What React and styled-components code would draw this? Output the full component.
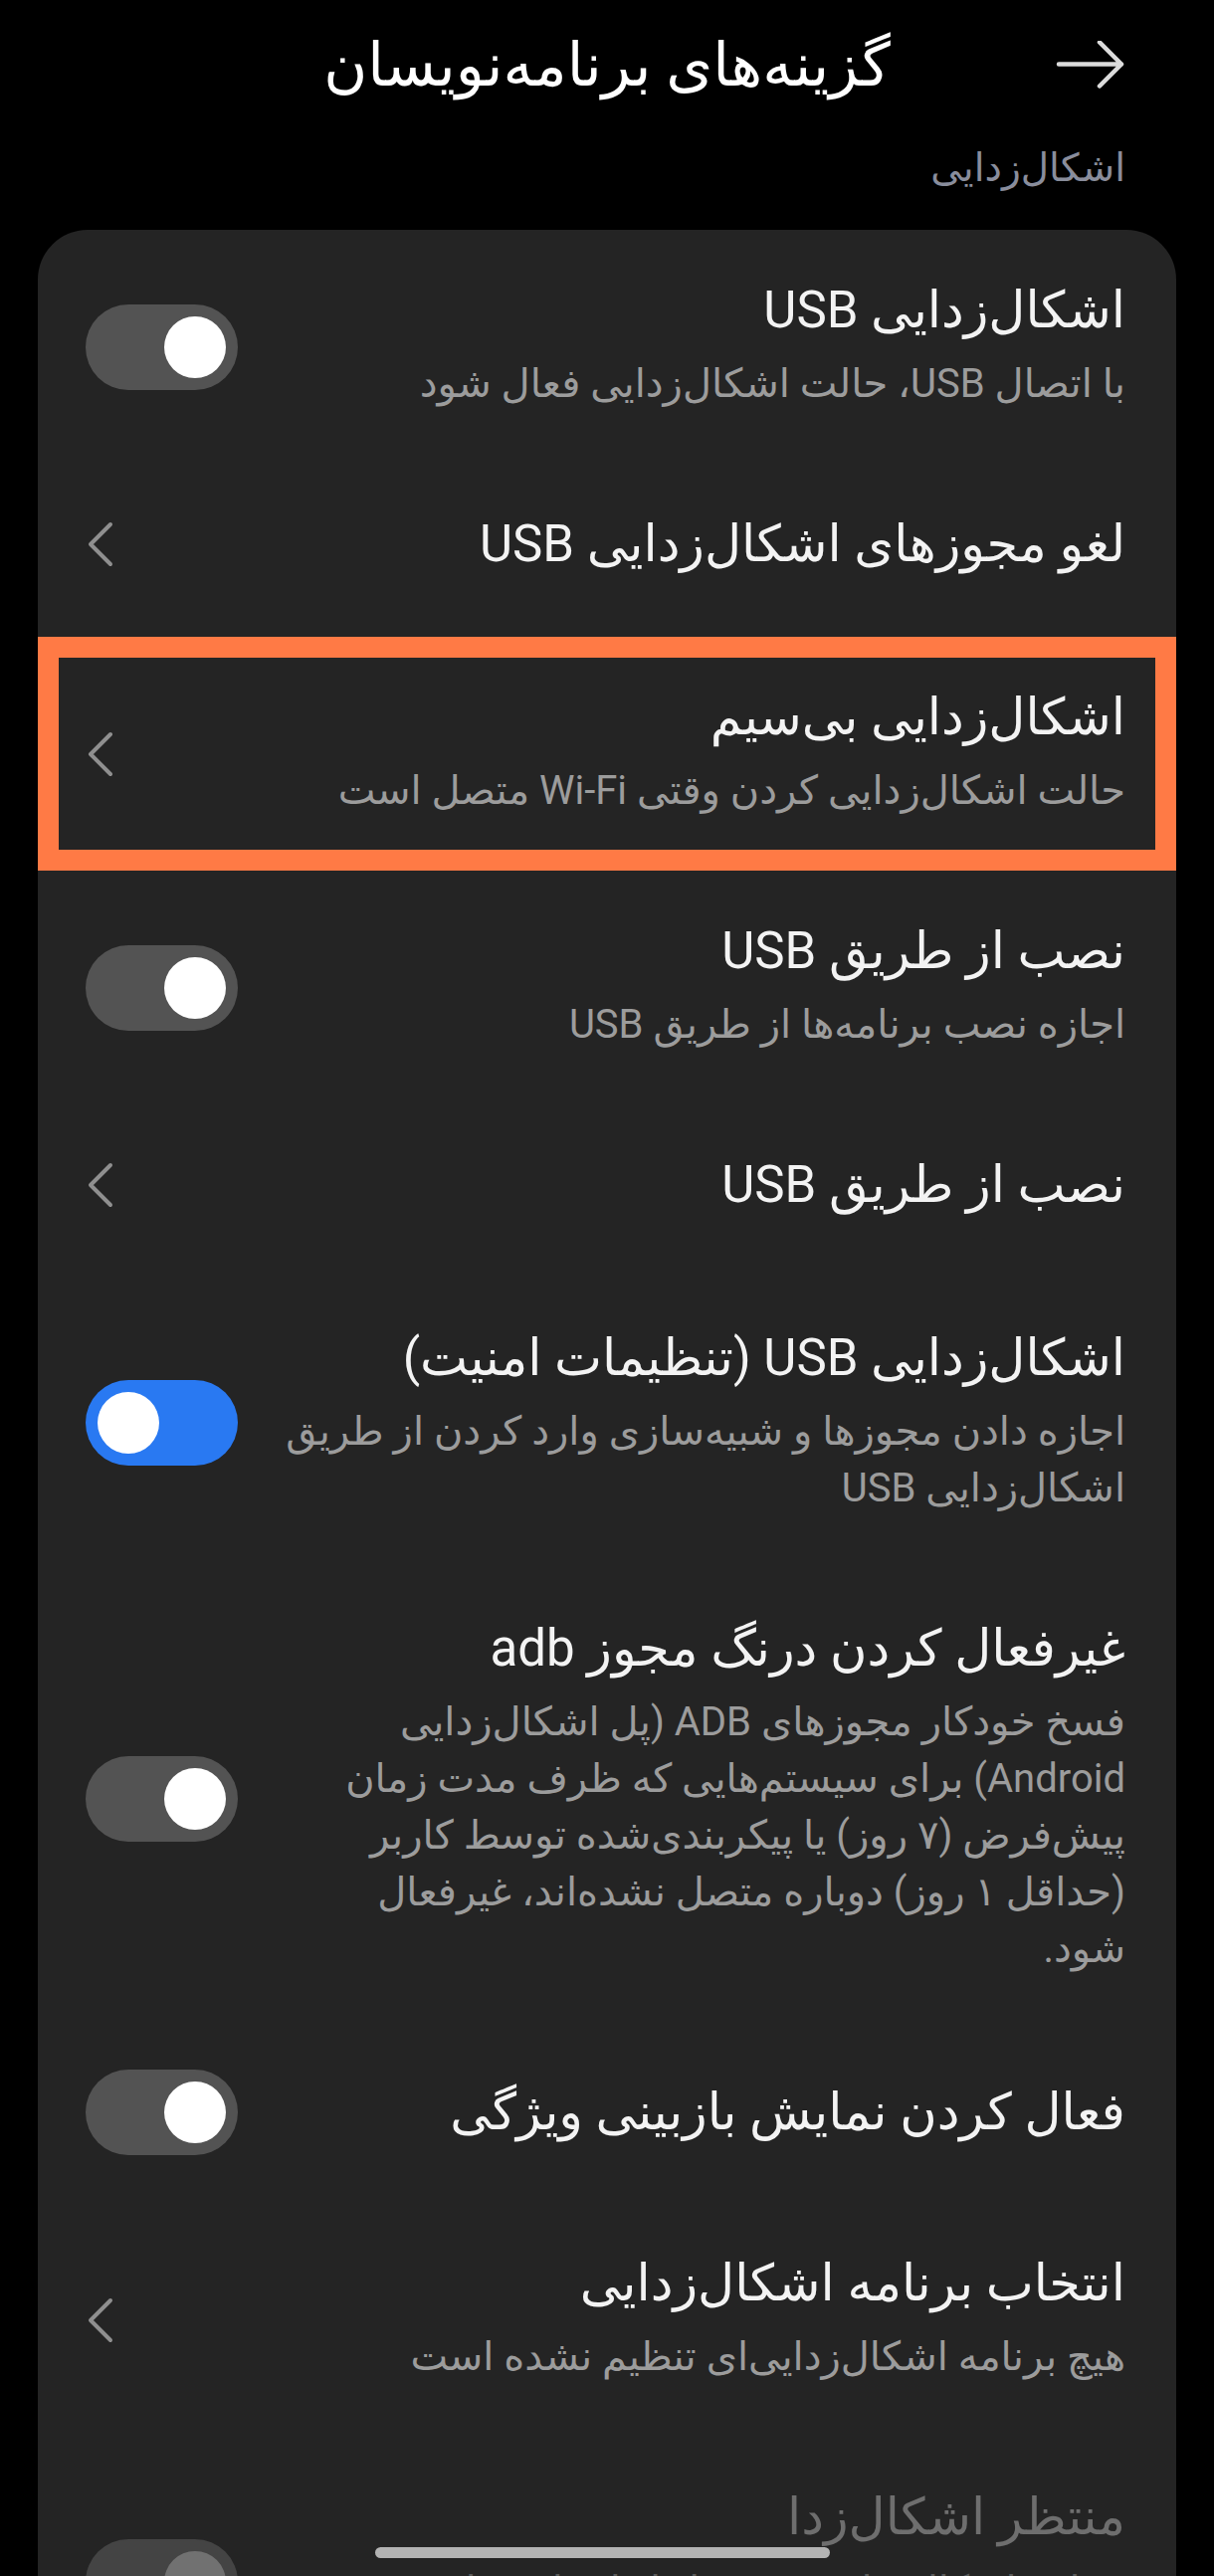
import React from 'react'
import styled, { createGlobalStyle } from 'styled-components'

const GlobalStyle = createGlobalStyle`
  html, body {
    margin: 0;
    padding: 0;
    background: #000;
  }
  * {
    box-sizing: border-box;
  }
`

const Page = styled.div`
  width: 1220px;
  height: 2589px;
  overflow: hidden;
  background: #000;
  direction: rtl;
  font-family: Roboto, "DejaVu Sans", sans-serif;
  position: relative;
`

const Header = styled.header`
  display: grid;
  grid-template-columns: 1fr auto 1fr;
  align-items: center;
  height: 132px;
  padding: 0 89px;
`

const BackButton = styled.button`
  justify-self: start;
  width: 70px;
  height: 50px;
  padding: 0;
  border: 0;
  background: none;
  display: flex;
  align-items: center;
  justify-content: center;
`

const Title = styled.h1`
  margin: 0;
  font-size: 60px;
  font-weight: 400;
  color: #fff;
  line-height: 76px;
`

const SectionLabel = styled.div`
  padding: 0 89px;
  height: 50px;
  line-height: 50px;
  font-size: 39px;
  color: #898d9c;
  margin: 12px 0 37px;
`

const Card = styled.section`
  margin: 0 38px;
  background: #242424;
  border-radius: 50px 50px 0 0;
  padding-bottom: 200px;
`

const rowPadding = p => {
  if (p.$single && p.$toggle) return '41px 51px 48px 48px'
  if (p.$single) return '52px 51px 64px 48px'
  return '52px 51px 52px 48px'
}

const Row = styled.div`
  display: flex;
  align-items: center;
  gap: 36px;
  padding: ${rowPadding};
  box-shadow: ${p => (p.$highlight ? 'inset 0 0 0 21px #ff7a45' : 'none')};
`

const TextBlock = styled.div`
  flex: 1;
  min-width: 0;
`

const ItemTitle = styled.div`
  font-size: 51px;
  line-height: 58px;
  color: ${p => (p.$disabled ? '#6e6e6e' : '#f3f3f3')};
`

const ItemSub = styled.div`
  margin-top: 16px;
  font-size: 40px;
  line-height: 57px;
  color: ${p => (p.$disabled ? '#5a5a5a' : '#9c9c9c')};
`

const Control = styled.div`
  flex: none;
  width: 153px;
  display: flex;
  justify-content: flex-end;
`

const Track = styled.div`
  direction: ltr;
  width: 153px;
  height: 86px;
  border-radius: 43px;
  padding: 0 12px;
  display: flex;
  align-items: center;
  justify-content: ${p => (p.$on ? 'flex-start' : 'flex-end')};
  background: ${p => (p.$disabled ? '#444' : p.$on ? '#2979f2' : '#535353')};
`

const Knob = styled.div`
  width: 62px;
  height: 62px;
  border-radius: 50%;
  background: ${p => (p.$disabled ? '#717171' : '#fff')};
`

const HomeIndicator = styled.div`
  position: absolute;
  left: 377px;
  bottom: 18px;
  width: 457px;
  height: 11px;
  border-radius: 6px;
  background: #b3b3b3;
`

const ArrowIcon = () => (
  <svg width="70" height="50" viewBox="0 0 70 50" fill="none">
    <path d="M3 23.5 H66 M44 1.5 L66 23.5 L44 45.5" stroke="#dcdcdc" strokeWidth="4.5" strokeLinecap="round" strokeLinejoin="round" />
  </svg>
)

const Chevron = () => (
  <svg width="30" height="48" viewBox="0 0 30 48" fill="none">
    <path d="M25 4 L5 24 L25 44" stroke="#8f8f8f" strokeWidth="4" strokeLinecap="round" strokeLinejoin="round" />
  </svg>
)

const Toggle = ({ on, disabled }) => (
  <Track $on={on} $disabled={disabled}>
    <Knob $disabled={disabled} />
  </Track>
)

const items = [
  { title: 'اشکال‌زدایی USB', sub: ['با اتصال USB، حالت اشکال‌زدایی فعال شود'], control: 'toggle' },
  { title: 'لغو مجوزهای اشکال‌زدایی USB', control: 'chevron' },
  { title: 'اشکال‌زدایی بی‌سیم', sub: ['حالت اشکال‌زدایی کردن وقتی Wi-Fi متصل است'], control: 'chevron', highlight: true },
  { title: 'نصب از طریق USB', sub: ['اجازه نصب برنامه‌ها از طریق USB'], control: 'toggle' },
  { title: 'نصب از طریق USB', control: 'chevron' },
  {
    title: 'اشکال‌زدایی USB (تنظیمات امنیت)',
    sub: ['اجازه دادن مجوزها و شبیه‌سازی وارد کردن از طریق', 'اشکال‌زدایی USB'],
    control: 'toggle',
    on: true,
  },
  {
    title: 'غیرفعال کردن درنگ مجوز adb',
    sub: [
      'فسخ خودکار مجوزهای ADB (پل اشکال‌زدایی',
      'Android) برای سیستم‌هایی که ظرف مدت زمان',
      'پیش‌فرض (۷ روز) یا پیکربندی‌شده توسط کاربر',
      '(حداقل ۱ روز) دوباره متصل نشده‌اند، غیرفعال',
      'شود.',
    ],
    control: 'toggle',
  },
  { title: 'فعال کردن نمایش بازبینی ویژگی', control: 'toggle' },
  { title: 'انتخاب برنامه اشکال‌زدایی', sub: ['هیچ برنامه اشکال‌زدایی‌ای تنظیم نشده است'], control: 'chevron' },
  {
    title: 'منتظر اشکال‌زدا',
    sub: ['برنامه اشکال‌زدایی‌شده قبل از اجرا منتظر پیوستن اشکال‌زدا می‌ماند'],
    control: 'toggle',
    disabled: true,
  },
]

export default function App() {
  return (
    <Page>
      <GlobalStyle />
      <Header>
        <BackButton aria-label="بازگشت">
          <ArrowIcon />
        </BackButton>
        <Title>گزینه‌های برنامه‌نویسان</Title>
        <span />
      </Header>
      <SectionLabel>اشکال‌زدایی</SectionLabel>
      <Card>
        {items.map((item, i) => (
          <Row
            key={i}
            $single={!item.sub}
            $toggle={item.control === 'toggle'}
            $highlight={item.highlight}
          >
            <TextBlock>
              <ItemTitle $disabled={item.disabled}>{item.title}</ItemTitle>
              {item.sub && (
                <ItemSub $disabled={item.disabled}>
                  {item.sub.map((line, j) => (
                    <div key={j}>{line}</div>
                  ))}
                </ItemSub>
              )}
            </TextBlock>
            <Control>
              {item.control === 'toggle' ? (
                <Toggle on={item.on} disabled={item.disabled} />
              ) : (
                <Chevron />
              )}
            </Control>
          </Row>
        ))}
      </Card>
      <HomeIndicator />
    </Page>
  )
}
